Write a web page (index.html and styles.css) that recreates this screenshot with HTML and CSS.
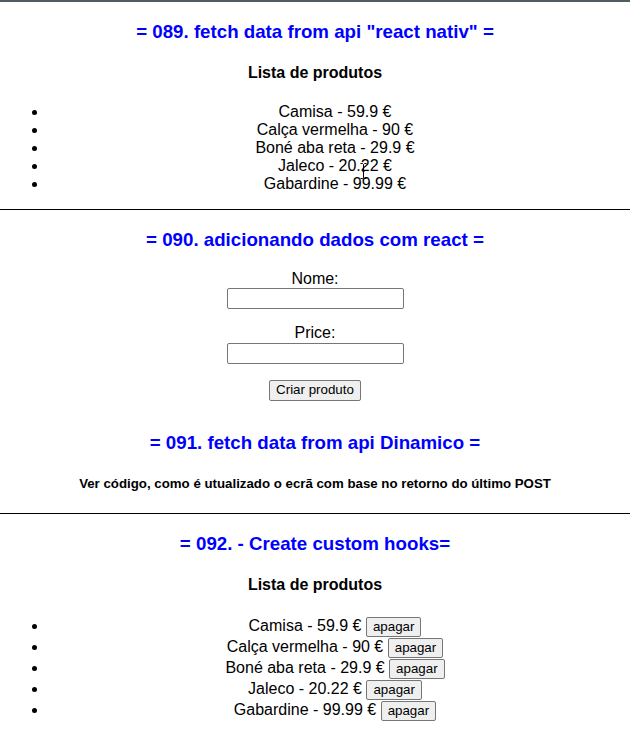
FILE: index.html
```html
<!DOCTYPE html>
<html lang="pt">
<head>
<meta charset="utf-8">
<title>React exercises</title>
<link rel="stylesheet" href="styles.css">
</head>
<body class="page">
<div class="app">
  <section class="sec">
    <h3 class="title">= 089. fetch data from api "react nativ" =</h3>
    <h4 class="subtitle">Lista de produtos</h4>
    <ul class="list">
      <li>Camisa - 59.9 €</li>
      <li>Calça vermelha - 90 €</li>
      <li>Boné aba reta - 29.9 €</li>
      <li>Jaleco - 20.22 €</li>
      <li>Gabardine - 99.99 €</li>
    </ul>
  </section>
  <hr class="divider">
  <section class="sec">
    <h3 class="title">= 090. adicionando dados com react =</h3>
    <form class="form">
      <div class="field">
        <label class="label" for="nome">Nome:</label>
        <input class="input" id="nome" type="text">
      </div>
      <div class="field">
        <label class="label" for="price">Price:</label>
        <input class="input" id="price" type="text">
      </div>
      <div class="actions">
        <button class="btn" type="button">Criar produto</button>
      </div>
    </form>
    <h3 class="title">= 091. fetch data from api Dinamico =</h3>
    <h5 class="note">Ver código, como é utualizado o ecrã com base no retorno do último POST</h5>
  </section>
  <hr class="divider">
  <section class="sec">
    <h3 class="title">= 092. - Create custom hooks=</h3>
    <h4 class="subtitle">Lista de produtos</h4>
    <ul class="list list-actions">
      <li>Camisa - 59.9 € <button class="btn" type="button">apagar</button></li>
      <li>Calça vermelha - 90 € <button class="btn" type="button">apagar</button></li>
      <li>Boné aba reta - 29.9 € <button class="btn" type="button">apagar</button></li>
      <li>Jaleco - 20.22 € <button class="btn" type="button">apagar</button></li>
      <li>Gabardine - 99.99 € <button class="btn" type="button">apagar</button></li>
    </ul>
  </section>
  <svg class="cursor" width="7" height="16" viewBox="0 0 7 16" aria-hidden="true">
    <path d="M0.5 0.5h2l1 1 1-1h2M3.5 1.5v13M0.5 15.5h2l1-1 1 1h2M2 8h3" fill="none" stroke="#000" stroke-width="1"/>
  </svg>
</div>
</body>
</html>
```
FILE: styles.css
```css
html, body {
  margin: 0;
  padding: 0;
  background: #fff;
}
.page {
  font-family: "Liberation Sans", Arial, sans-serif;
  font-size: 16px;
  color: #000;
}
.app {
  position: relative;
  border-top: 2px solid #4e5c63;
  padding: 0 8px;
  text-align: center;
}
.title {
  color: #0000ff;
  font-size: 18.72px;
  font-weight: bold;
  margin: 18.72px 0;
}
.subtitle {
  font-size: 16px;
  font-weight: bold;
  margin: 21.28px 0;
}
.list {
  margin: 16px 0;
  padding-left: 40px;
}
.list li {
  line-height: 18px;
}
.list-actions li {
  line-height: 21px;
  height: 21px;
}
.divider {
  border: 0;
  border-top: 1px solid #000;
  height: 0;
  margin: 8px -8px;
}
.form {
  margin: 0;
}
.field {
  margin-bottom: 15px;
}
.label {
  display: block;
  line-height: 18.4px;
}
.input {
  display: inline-block;
  box-sizing: border-box;
  width: 177px;
  height: 21px;
  border: 1px solid #767676;
  border-radius: 2px;
  padding: 1px 2px;
  font-family: "Liberation Sans", Arial, sans-serif;
  font-size: 13.33px;
  vertical-align: top;
}
.actions {
  margin-bottom: 31px;
  line-height: 21px;
}
.btn {
  box-sizing: border-box;
  height: 20px;
  padding: 1px 6px;
  border: 1px solid #767676;
  border-radius: 2px;
  background: #efefef;
  color: #000;
  font-family: "Liberation Sans", Arial, sans-serif;
  font-size: 13.33px;
  line-height: 16px;
  vertical-align: middle;
}
.actions .btn {
  height: 21px;
}
.note {
  font-size: 13.28px;
  font-weight: bold;
  margin: 22.18px 0;
}
.cursor {
  position: absolute;
  left: 360px;
  top: 161px;
}
```
